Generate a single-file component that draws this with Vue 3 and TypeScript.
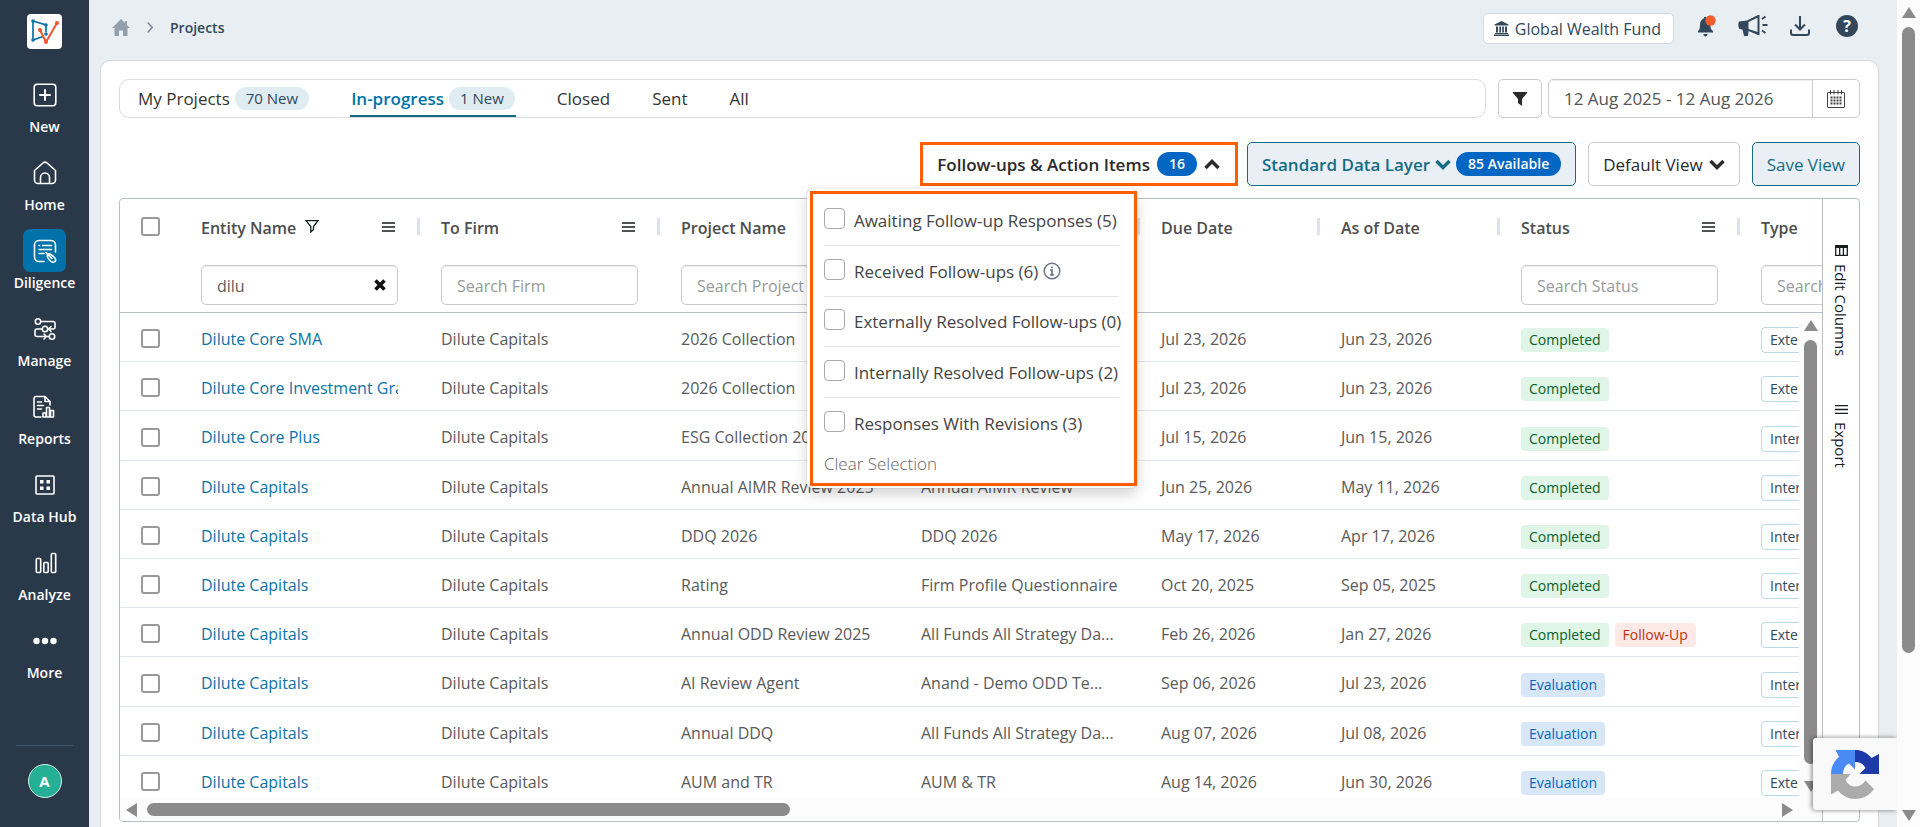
<script setup lang="ts">
import { ref } from 'vue'

interface NavItem { label: string; icon: string; active?: boolean }
interface Tab { label: string; badge?: string; active?: boolean }
interface Column { label: string; placeholder?: string; menu?: boolean; sep?: boolean; filtered?: boolean; width: string }
interface Row {
  entity: string; project: string; template: string
  due: string; asOf: string; status: string; followUp?: boolean; type: string
}

const nav: NavItem[] = [
  { label: 'New', icon: 'new' },
  { label: 'Home', icon: 'home' },
  { label: 'Diligence', icon: 'diligence', active: true },
  { label: 'Manage', icon: 'manage' },
  { label: 'Reports', icon: 'reports' },
  { label: 'Data Hub', icon: 'hub' },
  { label: 'Analyze', icon: 'analyze' },
  { label: 'More', icon: 'more' },
]

const tabs: Tab[] = [
  { label: 'My Projects', badge: '70 New' },
  { label: 'In-progress', badge: '1 New', active: true },
  { label: 'Closed' },
  { label: 'Sent' },
  { label: 'All' },
]

const columns: Column[] = [
  { label: 'Entity Name', placeholder: 'Search Entity', menu: true, sep: true, filtered: true, width: 'wide' },
  { label: 'To Firm', placeholder: 'Search Firm', menu: true, sep: true, width: 'wide' },
  { label: 'Project Name', placeholder: 'Search Project', menu: true, sep: true, width: 'wide' },
  { label: 'Template', placeholder: 'Search Template', sep: true, width: 'wide' },
  { label: 'Due Date', sep: true, width: 'narrow' },
  { label: 'As of Date', sep: true, width: 'narrow' },
  { label: 'Status', placeholder: 'Search Status', menu: true, sep: true, width: 'wide' },
  { label: 'Type', placeholder: 'Search Type', width: 'wide' },
]

const rows: Row[] = [
  { entity: 'Dilute Core SMA', project: '2026 Collection', template: '2026 Collection', due: 'Jul 23, 2026', asOf: 'Jun 23, 2026', status: 'Completed', type: 'External' },
  { entity: 'Dilute Core Investment Grade', project: '2026 Collection', template: '2026 Collection', due: 'Jul 23, 2026', asOf: 'Jun 23, 2026', status: 'Completed', type: 'External' },
  { entity: 'Dilute Core Plus', project: 'ESG Collection 2026', template: 'ESG Collection', due: 'Jul 15, 2026', asOf: 'Jun 15, 2026', status: 'Completed', type: 'Internal' },
  { entity: 'Dilute Capitals', project: 'Annual AIMR Review 2025', template: 'Annual AIMR Review', due: 'Jun 25, 2026', asOf: 'May 11, 2026', status: 'Completed', type: 'Internal' },
  { entity: 'Dilute Capitals', project: 'DDQ 2026', template: 'DDQ 2026', due: 'May 17, 2026', asOf: 'Apr 17, 2026', status: 'Completed', type: 'Internal' },
  { entity: 'Dilute Capitals', project: 'Rating', template: 'Firm Profile Questionnaire', due: 'Oct 20, 2025', asOf: 'Sep 05, 2025', status: 'Completed', type: 'Internal' },
  { entity: 'Dilute Capitals', project: 'Annual ODD Review 2025', template: 'All Funds All Strategy Da...', due: 'Feb 26, 2026', asOf: 'Jan 27, 2026', status: 'Completed', followUp: true, type: 'External' },
  { entity: 'Dilute Capitals', project: 'AI Review Agent', template: 'Anand - Demo ODD Te...', due: 'Sep 06, 2026', asOf: 'Jul 23, 2026', status: 'Evaluation', type: 'Internal' },
  { entity: 'Dilute Capitals', project: 'Annual DDQ', template: 'All Funds All Strategy Da...', due: 'Aug 07, 2026', asOf: 'Jul 08, 2026', status: 'Evaluation', type: 'Internal' },
  { entity: 'Dilute Capitals', project: 'AUM and TR', template: 'AUM & TR', due: 'Aug 14, 2026', asOf: 'Jun 30, 2026', status: 'Evaluation', type: 'External' },
]

const followUps = [
  { label: 'Awaiting Follow-up Responses (5)' },
  { label: 'Received Follow-ups (6)', info: true },
  { label: 'Externally Resolved Follow-ups (0)' },
  { label: 'Internally Resolved Follow-ups (2)' },
  { label: 'Responses With Revisions (3)' },
]

const menuOpen = ref(true)
const dateRange = ref('12 Aug 2025 - 12 Aug 2026')
const search = ref<Record<string, string>>({ 'Entity Name': 'dilu' })
const picked = ref<string[]>([])
</script>

<template>
  <div class="app">
    <nav class="sidebar" aria-label="Main">
      <a href="#" class="logo" aria-label="Start">
        <svg width="35" height="35" viewBox="0 0 35 35" fill="none">
          <path d="M6 7 19 11V18M6 7V26L16 22.500" stroke="#0a73a8" stroke-width="1.700" />
          <path d="M13 16 19 28 30 9" stroke="#f0562b" stroke-width="2" stroke-linejoin="round" />
          <circle cx="6" cy="7" r="1.800" fill="#0a73a8" /><circle cx="6" cy="26" r="1.800" fill="#0a73a8" /><circle cx="19" cy="11" r="1.800" fill="#0a73a8" /><circle cx="19" cy="20" r="1.800" fill="#0a73a8" />
          <circle cx="13" cy="16" r="2" fill="#f0562b" /><circle cx="30" cy="9" r="2" fill="#f0562b" /><circle cx="19" cy="28" r="2" fill="#f0562b" />
        </svg>
      </a>
      <a v-for="n in nav" :key="n.label" href="#" class="nav-item" :class="{ active: n.active }">
        <span class="nav-icon">
          <svg width="24" height="24" viewBox="0 0 24 24" fill="none" stroke="#fff" stroke-width="1.600" stroke-linecap="round" stroke-linejoin="round">
            <template v-if="n.icon === 'new'">
              <rect x="1.200" y="1.200" width="21.600" height="21.600" rx="3" /><path d="M12 7v10M7 12h10" stroke-width="2" />
            </template>
            <template v-else-if="n.icon === 'home'">
              <path d="M1.500 9.500 10 2a3 3 0 0 1 4 0l8.500 7.500V19a3.500 3.500 0 0 1-3.500 3.500H5A3.500 3.500 0 0 1 1.500 19Z" /><path d="M7.500 22v-5.500a4.500 4.500 0 0 1 9 0V22" />
            </template>
            <template v-else-if="n.icon === 'diligence'">
              <path d="M11 22.500H6A4.500 4.500 0 0 1 1.500 18V6A4.500 4.500 0 0 1 6 1.500h12A4.500 4.500 0 0 1 22.500 6v7" />
              <path d="M6 6.500h.5M9.500 6.500H18.500M6 10.500h12.500M6 14.500h5" />
              <path d="M14.500 15.500c2-2 4.500.5 6.500 2.500 1.500 1.500 2.500 3 1 4.500s-3.500.5-5-1c-1.500-1.500-3.500-4-2.500-6ZM13 13.500l6 6" />
            </template>
            <template v-else-if="n.icon === 'manage'">
              <circle cx="5" cy="4.500" r="2.700" /><circle cx="12" cy="12" r="2.700" /><circle cx="19" cy="19.500" r="2.700" />
              <path d="M8 4.500h12a2 2 0 0 1 2 2V10a2 2 0 0 1-2 2h-5M9 12H4a2 2 0 0 0-2 2v3.500a2 2 0 0 0 2 2h11.500M18 9.500 15.500 12l2.500 2.500M11 17l2.500 2.500L11 22" />
            </template>
            <template v-else-if="n.icon === 'reports'">
              <path d="M9 22H4a2 2 0 0 1-2-2V3.500a2 2 0 0 1 2-2h9l5 5V10M13 1.500v5h5M5.500 7h4M5.500 10.500h6M5.500 14h4" />
              <path d="M11 22v-4h3v4ZM14.500 22v-9.500h3V22ZM18.500 22v-6.500h3V22Z" />
            </template>
            <template v-else-if="n.icon === 'hub'">
              <rect x="3" y="3" width="18" height="18" rx="1" />
              <path d="M7 7h3.500v3.500H7ZM13.500 7H17v3.500h-3.500ZM7 13.500h3.500V17H7ZM13.500 13.500H17V17h-3.500Z" fill="#fff" stroke="none" />
            </template>
            <template v-else-if="n.icon === 'analyze'">
              <rect x="3.300" y="7.500" width="4.400" height="14" rx="1" /><rect x="10.800" y="11.500" width="4.400" height="10" rx="1" /><rect x="18.300" y="2.500" width="4.400" height="19" rx="1" />
            </template>
            <g v-else fill="#fff" stroke="none">
              <circle cx="3.500" cy="12" r="3.200" /><circle cx="12" cy="12" r="3.200" /><circle cx="20.500" cy="12" r="3.200" />
            </g>
          </svg>
        </span>
        <span class="nav-label">{{ n.label }}</span>
      </a>
      <div class="account">
        <button type="button" class="avatar">A</button>
      </div>
    </nav>

    <main class="main">
      <header class="topbar">
        <a href="#" class="crumb-home" aria-label="Home">
          <svg width="18" height="17" viewBox="0 0 18 17" fill="#93a0ac"><path d="M9 0 0 9h2.500v8h4.500v-5.500h4V17h4.500V9H18l-3-3V2h-2v2Z" /></svg>
        </a>
        <svg width="6" height="11" viewBox="0 0 6 11" fill="none" stroke="#7b8793" stroke-width="1.500"><path d="m.7.500 4.500 5-4.500 5" /></svg>
        <span class="crumb">Projects</span>
        <button type="button" class="fund">
          <svg width="15" height="15" viewBox="0 0 15 15" fill="#33475b"><path d="M7.500 0 14.500 3.500v1H.5v-1ZM2 5.500h2v6H2ZM5.300 5.500h1.700v6H5.300ZM8.200 5.500h1.700v6H8.200ZM11 5.500h2v6h-2ZM1 12h13v1H1ZM0 13.500h15V15H0Z" /></svg>
          Global Wealth Fund
        </button>
        <div class="top-icons">
          <button type="button" class="icon-btn" aria-label="Notifications">
            <svg width="20" height="24" viewBox="0 0 20 24"><path d="M2 18.500v-1.500c1.500-1.500 2-2.500 2-6 0-3.500 1.500-6 4-6.800V3h2v1.200c2.500.8 4.500 3.300 4.500 6.800 0 3.500.5 4.500 2.500 6v1.500ZM7.500 20h4c0 1.500-.8 2.500-2 2.500s-2-1-2-2.500Z" fill="#33475b" /><circle cx="14.500" cy="6.500" r="5.200" fill="#f15a29" /></svg>
          </button>
          <button type="button" class="icon-btn" aria-label="Announcements">
            <svg width="30" height="22" viewBox="0 0 30 22"><path d="M1 6.500 9 5.500 20 0h1.500v20H20L10.500 16l-.5 5H6l-1.500-6.500L1.500 14C0 12 0 8.500 1 6.500Z" fill="#33475b" /><path d="M10.500 7 19.500 2.700v14.300L10.500 14Z" fill="#e9eef3" /><path d="m24 4 3.500-2.500M24.500 10h5M24 15.500l3.500 2.500" stroke="#33475b" stroke-width="1.900" /></svg>
          </button>
          <button type="button" class="icon-btn" aria-label="Downloads">
            <svg width="20" height="20" viewBox="0 0 20 20" fill="none" stroke="#33475b" stroke-width="2"><path d="M10 0v13M5 8.500l5 5 5-5M1 13.500V17a2 2 0 0 0 2 2h14a2 2 0 0 0 2-2v-3.500" /></svg>
          </button>
          <button type="button" class="icon-btn help" aria-label="Help">?</button>
        </div>
      </header>

      <section class="card">
        <div class="filters">
          <div class="tabs">
            <button v-for="t in tabs" :key="t.label" type="button" class="tab" :class="{ active: t.active }">
              {{ t.label }}<span v-if="t.badge" class="tab-badge">{{ t.badge }}</span>
            </button>
          </div>
          <button type="button" class="funnel" aria-label="Filter">
            <svg width="14" height="14" viewBox="0 0 14 14" fill="#2a2a2a"><path d="M0 0h14v1L9 7v7l-4-3V7L0 1Z" /></svg>
          </button>
          <div class="date">
            <input v-model="dateRange" type="text" aria-label="Date range" />
            <button type="button" aria-label="Open calendar">
              <svg width="18" height="18" viewBox="0 0 18 18" fill="none" stroke="#444"><rect x=".5" y="2.500" width="17" height="15" rx=".5" /><path d="M3.500 0v4.500M7 0v4.500M11 0v4.500M14.500 0v4.500" /><path d="M3.500 7.500h11M3.500 10.500h11M3.500 13.500h11" stroke-width="1.800" stroke-dasharray="2 1" /></svg>
            </button>
          </div>
        </div>

        <div class="toolbar">
          <div class="follow">
            <button type="button" class="btn follow-btn" :aria-expanded="menuOpen" @click="menuOpen = !menuOpen">
              Follow-ups &amp; Action Items
              <span class="pill">16</span>
              <svg width="16" height="11" viewBox="0 0 16 11" fill="none" stroke="#2a2a2a" stroke-width="3.400"><path d="m1.500 9 6.500-6.500L14.500 9" /></svg>
            </button>
            <div v-if="menuOpen" class="popover">
              <div class="popover-inner">
                <label v-for="f in followUps" :key="f.label" class="option">
                  <input v-model="picked" type="checkbox" :value="f.label" />
                  <span>{{ f.label }}</span>
                  <svg v-if="f.info" width="18" height="18" viewBox="0 0 18 18" fill="none" stroke="#6b7285" stroke-width="1.500"><circle cx="9" cy="9" r="7.800" /><path d="M7 8h2v5M7 13h4M8.200 5.300h1.600" stroke-width="1.700" /></svg>
                </label>
                <button type="button" class="clear" @click="picked = []">Clear Selection</button>
              </div>
            </div>
          </div>
          <button type="button" class="btn tinted strong">
            Standard Data Layer
            <svg width="16" height="11" viewBox="0 0 16 11" fill="none" stroke="#146c84" stroke-width="3.400"><path d="m1.500 2 6.500 6.500L14.500 2" /></svg>
            <span class="pill">85 Available</span>
          </button>
          <button type="button" class="btn">
            Default View
            <svg width="16" height="11" viewBox="0 0 16 11" fill="none" stroke="#2a2a2a" stroke-width="3.400"><path d="m1.500 2 6.500 6.500L14.500 2" /></svg>
          </button>
          <button type="button" class="btn tinted">Save View</button>
        </div>

        <div class="grid">
          <div class="grid-main">
            <table>
              <colgroup>
                <col class="check" />
                <col v-for="c in columns" :key="c.label" :class="c.width" />
              </colgroup>
              <thead>
                <tr>
                  <th class="check-cell"><input type="checkbox" class="box" aria-label="Select all" /></th>
                  <th v-for="c in columns" :key="c.label" scope="col">
                    <div class="head" :class="{ sep: c.sep }">
                      <span>{{ c.label }}</span>
                      <svg v-if="c.filtered" width="14" height="13" viewBox="0 0 14 13" fill="none" stroke="#181d1f" stroke-width="1.300"><path d="M1 .7h12L8.500 6.500v3L5.800 12V6.500Z" /></svg>
                      <button v-if="c.menu" type="button" class="col-menu" :aria-label="c.label + ' menu'">
                        <svg width="13" height="10" viewBox="0 0 13 10" stroke="#181d1f" stroke-width="1.500"><path d="M0 1h13M0 5h13M0 9h13" /></svg>
                      </button>
                    </div>
                    <div class="search">
                      <input v-if="c.placeholder" v-model="search[c.label]" type="text" :placeholder="c.placeholder" :aria-label="c.placeholder" />
                      <button v-if="c.filtered" type="button" aria-label="Clear search" @click="search[c.label] = ''">
                        <svg width="12" height="12" viewBox="0 0 12 12" stroke="#111" stroke-width="3.600"><path d="m1.500 1.500 9 9M10.500 1.500l-9 9" /></svg>
                      </button>
                    </div>
                  </th>
                </tr>
              </thead>
              <tbody>
                <tr v-for="(r, i) in rows" :key="i">
                  <td class="check-cell"><input type="checkbox" class="box" :aria-label="'Select row ' + (i + 1)" /></td>
                  <td><div class="clip"><a href="#">{{ r.entity }}</a></div></td>
                  <td><div class="clip">Dilute Capitals</div></td>
                  <td><div class="clip">{{ r.project }}</div></td>
                  <td><div class="clip">{{ r.template }}</div></td>
                  <td>{{ r.due }}</td>
                  <td>{{ r.asOf }}</td>
                  <td>
                    <div class="tags">
                      <span class="tag" :class="r.status.toLowerCase()">{{ r.status }}</span>
                      <span v-if="r.followUp" class="tag follow-up">Follow-Up</span>
                    </div>
                  </td>
                  <td><div class="tags"><span class="tag outline">{{ r.type }}</span></div></td>
                </tr>
              </tbody>
            </table>
            <div class="vbar">
              <span class="arrow up"></span><span class="thumb"></span><span class="arrow down"></span>
            </div>
            <div class="hbar">
              <span class="arrow left"></span><span class="track"><span class="thumb"></span></span><span class="arrow right"></span>
            </div>
          </div>
          <aside class="side">
            <button type="button">
              <svg width="13" height="11" viewBox="0 0 13 11" fill="none" stroke="#181d1f" stroke-width="1.300"><path d="M.7.700h11.600v9.600H.7ZM4.700 2v8M8.400 2v8" /><path d="M.5 1.600h12" stroke-width="2.600" /></svg>
              Edit Columns
            </button>
            <button type="button">
              <svg width="13" height="9" viewBox="0 0 13 9" stroke="#181d1f" stroke-width="1.300"><path d="M0 .7h13M0 4.500h13M0 8.300h13" /></svg>
              Export
            </button>
          </aside>
        </div>
      </section>

      <div class="captcha">
        <svg width="48" height="49" viewBox="0 0 48 49">
          <path d="M24 0C30.500 0 36 2.500 40.500 8L48 4v20H28.500l6-6C32 13.500 28.500 12 24 12Z" fill="#1c3aa9" />
          <path d="M24 0v19.500l-6-6c-4 2-6 6-6 10.500H0C0 17 3 11 8 7L4.500 0Z" fill="#4a8af4" />
          <path d="M0 24h19.500l-5 6c2 4 5.500 6.500 9.500 6.500 4 0 8-2 10.500-6L43 39c-4.500 6.500-11 10-19 10-6.500 0-12.500-3-17-8.500L0 44.500Z" fill="#ababab" />
        </svg>
      </div>
    </main>

    <div class="page-bar" aria-hidden="true">
      <span class="arrow up"></span><span class="thumb"></span><span class="arrow down"></span>
    </div>
  </div>
</template>

<style>
html,
body {
  margin: 0;
  overflow: hidden;
}
</style>

<style scoped>
* { box-sizing: border-box; }
.app {
  display: flex;
  height: 100vh;
  background: #e9eef3;
  font-family: "Open Sans", "Noto Sans", sans-serif;
  font-size: 16px;
  color: #333;
}
button, input { font: inherit; color: inherit; }
button { background: none; border: 0; padding: 0; cursor: pointer; }
a { text-decoration: none; }
svg { display: block; flex: none; }

.sidebar {
  display: flex;
  flex-direction: column;
  align-items: center;
  flex: none;
  width: 89px;
  padding-top: 14px;
  background: #2a3949;
}
.logo { width: 35px; height: 35px; margin-bottom: 24px; background: #fff; border-radius: 4px; }
.nav-item { display: flex; flex-direction: column; align-items: center; height: 78px; color: #fff; }
.nav-icon { display: flex; align-items: center; justify-content: center; width: 43px; height: 43px; border-radius: 7px; }
.active .nav-icon { background: #0072a9; }
.nav-label { font-size: 14px; line-height: 22px; font-weight: 600; }
.account {
  display: flex;
  justify-content: center;
  width: 57px;
  margin-top: auto;
  padding: 18px 0 29px;
  border-top: 1px solid #41566c;
}
.avatar {
  width: 34px;
  height: 34px;
  border: 1px solid #d5f0e8;
  border-radius: 50%;
  background: #25b095;
  color: #fff;
  font-size: 15px;
  font-weight: 700;
}

.main { position: relative; display: flex; flex: 1; flex-direction: column; min-width: 0; padding: 0 18px 0 11px; }
.topbar { display: flex; align-items: center; flex: none; height: 60px; padding: 0 21px 5px 12px; }
.crumb-home { margin-right: 17px; }
.crumb { margin-left: 17px; font-size: 14px; font-weight: 600; color: #33475b; }
.fund {
  display: flex;
  align-items: center;
  gap: 6px;
  height: 31px;
  margin-top: 2px;
  margin-left: auto;
  padding: 0 12px 0 10px;
  background: #fff;
  border: 1px solid #d3d9df;
  border-radius: 5px;
  color: #33475b;
}
.top-icons { display: flex; align-items: center; gap: 22px; margin: 0 0 3px 22px; }
.help {
  width: 22px;
  height: 22px;
  margin-left: 4px;
  border-radius: 50%;
  background: #33475b;
  color: #fff;
  font-size: 16px;
  line-height: 22px;
  font-weight: 700;
}

.card {
  display: flex;
  flex: 1;
  flex-direction: column;
  min-height: 0;
  padding: 18px 18px 5px;
  background: #fff;
  border: 1px solid #d5d8db;
  border-bottom: 0;
  border-radius: 10px 10px 0 0;
}
.filters { display: flex; flex: none; height: 39px; font-size: 17px; }
.tabs { display: flex; flex: 1; gap: 40px; margin-right: 12px; padding: 0 17px; border: 1px solid #dcdcdc; border-radius: 10px; }
.tab { display: flex; align-items: center; border-bottom: 2px solid transparent; padding: 2px 1px 0; }
.tab.active { border-color: #146c84; color: #0072a9; font-weight: 600; }
.tab-badge {
  height: 23px;
  margin-left: 5px;
  padding: 0 11px;
  border-radius: 12px;
  background: #dfecf2;
  color: #33475b;
  font-size: 15px;
  line-height: 23px;
  font-weight: 400;
}
.funnel { display: flex; align-items: center; justify-content: center; width: 44px; margin-right: 6px; border: 1px solid #ccc; border-radius: 5px; }
.date { display: flex; width: 312px; border: 1px solid #ccc; border-radius: 5px; }
.date input { flex: 1; min-width: 0; padding: 0 15px; border: 0; border-radius: 5px 0 0 5px; background: #fff; color: #555; box-shadow: inset 0 1px 1px #00000013; outline: 0; }
.date button { display: flex; align-items: center; justify-content: center; width: 47px; border-left: 1px solid #ccc; }

.toolbar { display: flex; flex: none; justify-content: flex-end; gap: 12px; margin: 24px 0 12px; font-size: 17px; }
.btn {
  display: flex;
  align-items: center;
  gap: 6px;
  height: 44px;
  padding: 0 14px;
  border: 1px solid #ccc;
  border-radius: 5px;
  background: #fff;
  color: #2a2a2a;
  white-space: nowrap;
}
.btn.tinted { background: #e9eff5; border-color: #146c84; color: #146c84; }
.btn.strong { gap: 5px; font-weight: 600; }
.btn.follow-btn { gap: 7px; padding: 0 15px 0 14px; border: 3px solid #ff5f00; border-radius: 0; font-weight: 600; }
.pill { height: 24px; padding: 0 12px; border-radius: 12px; background: #0366c2; color: #fff; font-size: 14px; line-height: 24px; }
.follow { position: relative; margin-right: -3px; }
.popover {
  position: absolute;
  z-index: 5;
  top: 47px;
  right: 101px;
  width: 330px;
  padding: 2px 0 2px 3px;
  border-radius: 5px;
  background: #fff;
  box-shadow: 0 0 1px #0006, 0 6px 14px #0000002e;
}
.popover-inner { padding: 1px 15px 6px 11px; border: 3px solid #ff5f00; }
.option { display: flex; align-items: center; height: 51px; border-bottom: 1px solid #e5e5e5; white-space: nowrap; color: #444; }
.option:nth-child(3) { height: 50px; }
.option:nth-last-child(2) { border-bottom: 0; }
.option input { appearance: none; flex: none; width: 21px; height: 21px; margin: 0 9px 4px 0; border: 1px solid #aaa; border-radius: 4px; background: #fff; }
.option svg { margin-left: 5px; }
.clear { display: block; height: 28px; color: #666; font-weight: 300; }

.grid { display: flex; flex: 1; min-height: 0; overflow: hidden; border: 1px solid #babfc7; border-radius: 4px; }
.grid-main { position: relative; flex: 1; min-width: 0; overflow: hidden; }
table { width: 1860px; border-collapse: separate; border-spacing: 0; table-layout: fixed; color: #5a5a5a; }
.check { width: 60px; }
.wide { width: 240px; }
.narrow { width: 180px; }
th, td { padding: 0 22px 0 21px; text-align: left; font-weight: 400; white-space: nowrap; }
th { height: 114px; vertical-align: top; border-bottom: 1px solid #babfc7; }
td { height: 49px; padding-top: 3px; border-bottom: 1px solid #e2e6ee; }
tbody tr:nth-child(5n+3) td { height: 50px; }
td a { color: #0a73a8; }
.check-cell { padding-right: 0; }
th.check-cell { padding-top: 18px; }
.box { appearance: none; display: block; width: 19px; height: 19px; margin: 0; border: 2px solid #999; border-radius: 3px; background: #fff; }
.head { display: flex; align-items: center; gap: 9px; height: 17px; margin: 19px -22px 0 0; padding-right: 22px; color: #4d4d4d; font-weight: 600; }
.head.sep { border-right: 3px solid #dde2eb; }
.head span { padding-top: 2px; }
.col-menu { margin-left: auto; }
.search { position: relative; height: 40px; margin-top: 30px; }
.search input { width: 100%; height: 40px; padding: 1px 15px 0; border: 1px solid #ccc; border-radius: 5px; background: #fff; box-shadow: inset 0 1px 1px #00000013; outline: 0; }
.search input::placeholder { color: #999; opacity: 1; }
.search button { position: absolute; top: 14px; right: 12px; }
.clip { overflow: hidden; }
.tags { display: flex; gap: 6px; padding-top: 3px; }
.tag { height: 24px; padding: 0 8px; border-radius: 4px; font-size: 14px; line-height: 24px; }
.completed { background: #def5e8; color: #0a5f28; }
.evaluation { background: #d7e7f7; color: #0366c2; }
.follow-up { background: #fdeae7; color: #c22f0c; }
.outline { height: 26px; border: 1px solid #bcd9e8; color: #33475b; }

.arrow { flex: none; width: 0; height: 0; border: 7px solid transparent; }
.up { border-top: 0; border-bottom: 11px solid #8b8b8b; }
.down { border-bottom: 0; border-top: 11px solid #8b8b8b; }
.left { border-left: 0; border-right: 11px solid #8b8b8b; }
.right { border-right: 0; border-left: 11px solid #8b8b8b; }
.thumb { border-radius: 7px; background: #8b8b8b; }
.vbar {
  position: absolute;
  top: 114px;
  right: 0;
  bottom: 0;
  display: flex;
  flex-direction: column;
  align-items: center;
  gap: 9px;
  width: 23px;
  padding: 7px 0 29px;
  background: #fcfcfc;
}
.vbar .thumb { flex: 1; width: 13px; }
.vbar .down { margin-top: 8px; }
.hbar {
  position: absolute;
  right: 23px;
  bottom: 0;
  left: 0;
  display: flex;
  align-items: center;
  gap: 10px;
  height: 23px;
  padding: 0 6px;
  background: #fcfcfc;
}
.track { display: flex; flex: 1; }
.hbar .thumb { width: 39.600%; height: 13px; }
.side { display: flex; flex: none; flex-direction: column; align-items: center; width: 37px; padding-top: 46px; border-left: 1px solid #babfc7; color: #181d1f; }
.side button { display: flex; align-items: center; gap: 8px; margin-bottom: 49px; writing-mode: vertical-rl; font-size: 15px; }

.captcha {
  position: absolute;
  right: 0;
  bottom: 17px;
  z-index: 6;
  display: flex;
  align-items: center;
  width: 84px;
  height: 72px;
  padding-left: 18px;
  border-radius: 3px 0 0 3px;
  background: #f9f9f9;
  box-shadow: -1px 0 5px #00000080;
  clip-path: inset(-8px 0 -8px -8px);
}
.page-bar { display: flex; flex: none; flex-direction: column; align-items: center; width: 23px; padding: 7px 0 6px; background: #fcfcfc; }
.page-bar .thumb { width: 13px; height: 75.700vh; margin-top: 9px; }
.page-bar .down { margin-top: auto; }
</style>
